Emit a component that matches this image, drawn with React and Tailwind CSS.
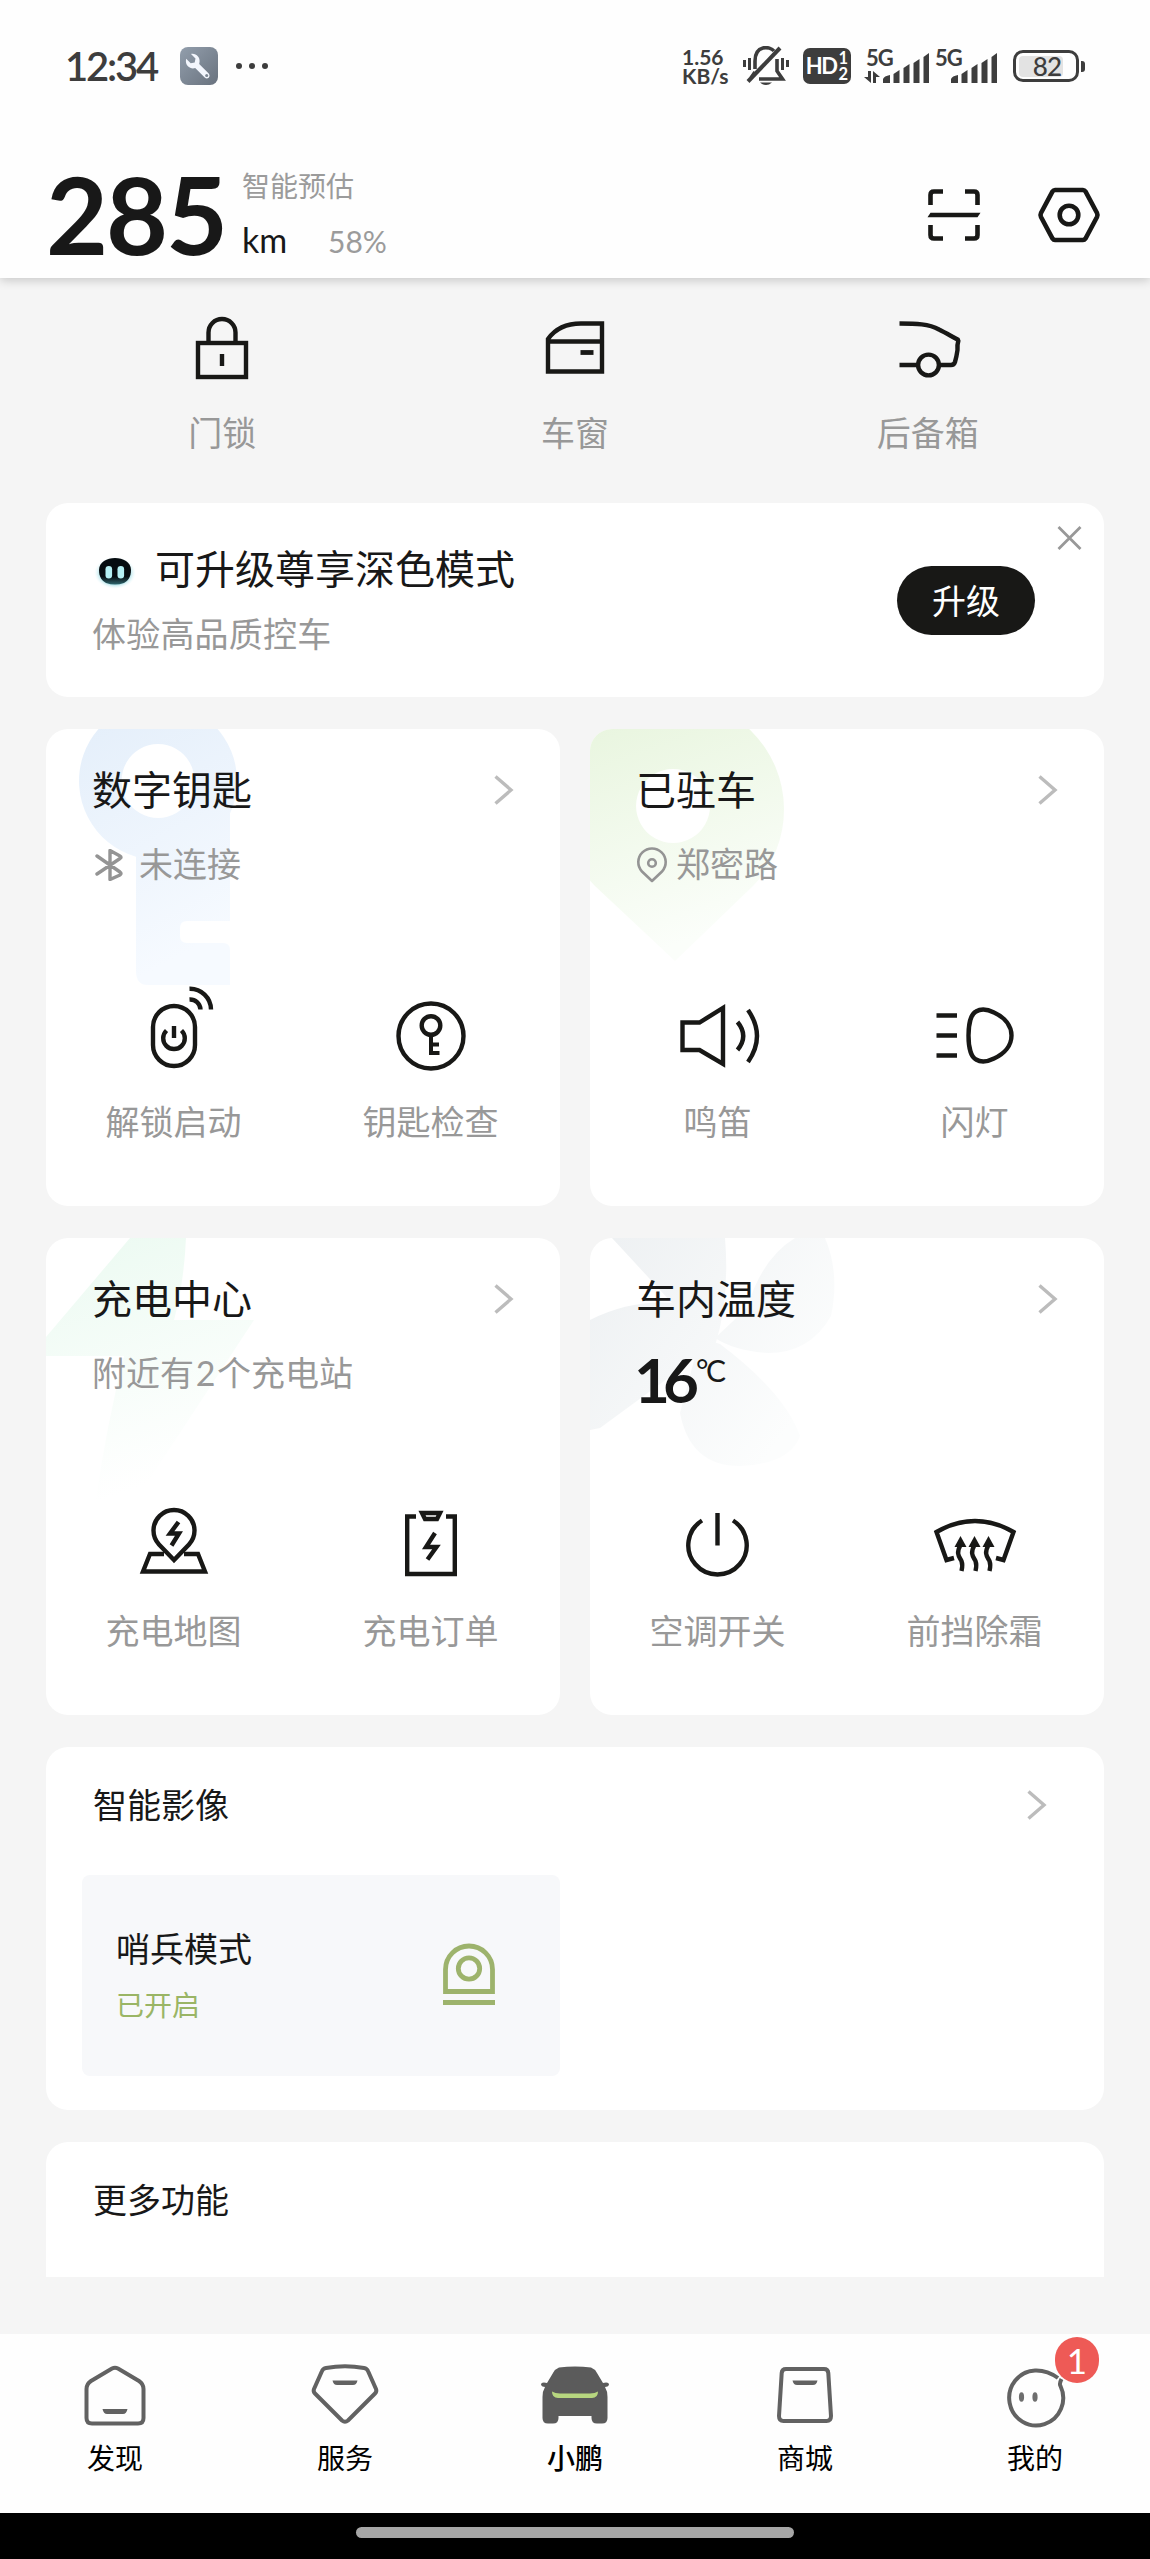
import React from "react";

const INK = "#181816";

function Glyph({ className = "size-[100px]", box = "-50 -50 100 100", color = INK, width = 4.4, children }) {
  return (
    <svg className={`shrink-0 overflow-visible ${className}`} viewBox={box} fill="none" stroke={color} strokeWidth={width}>
      {children}
    </svg>
  );
}

function Chevron() {
  return (
    <svg className="h-[30px] w-5 shrink-0" viewBox="0 0 20 30" fill="none" stroke="#bcbcbc" strokeWidth="3.4">
      <path d="M1.5 1.5 L17 15 L1.5 28.5" />
    </svg>
  );
}

/* ---------- status bar ---------- */

function SignalBars() {
  return (
    <svg className="h-[30px] w-[46px]" viewBox="0 0 46 30" fill="#3d3d3d">
      <path d="M0 30v-4q1-3 7-4v8zM10.500 30v-9l6-4v13zM20.500 30v-15l6-4v19zM30.500 30v-20l6-4v24zM40.500 30v-26l5.500-4v30z" />
    </svg>
  );
}

function StatusBar() {
  return (
    <div className="flex h-[132px] items-center pl-[65px] pr-[65px] text-[#3d3d3d]">
      <span className="w-[115px] whitespace-nowrap text-[40px] font-semibold leading-[40px] tracking-[-2.2px]">12:34</span>
      <svg className="h-[38px] w-[38px]" viewBox="0 0 38 38">
        <defs>
          <linearGradient id="tool" x1="0" y1="0" x2="1" y2="1">
            <stop offset="0" stopColor="#929eac" />
            <stop offset="1" stopColor="#69727e" />
          </linearGradient>
        </defs>
        <rect width="38" height="38" rx="8" fill="url(#tool)" />
        <path
          d="M11 7l4.500 4.500-.8 4-4 .8-4.500-4.500c-1 4 .5 7.500 4 9 1.800.8 3.500.7 5 .2l9.500 9.500c3 2.500 6.500-.8 4-4l-9.500-9.500c.8-3 .5-5.500-1.200-7.500C16.200 7.400 13.800 6.500 11 7z"
          fill="#f3f6fd"
        />
        <circle cx="26.700" cy="28.500" r="1.500" fill="#7c8693" />
      </svg>
      <div className="ml-[18px] flex gap-[7px]">
        <i className="size-1.5 rounded-full bg-[#3d3d3d]" />
        <i className="size-1.5 rounded-full bg-[#3d3d3d]" />
        <i className="size-1.5 rounded-full bg-[#3d3d3d]" />
      </div>
      <div className="ml-auto flex items-center">
        <div className="w-[61px] text-[21px] font-bold leading-[19px]">
          <div>1.56</div>
          <div>KB/s</div>
        </div>
        <svg className="h-[40px] w-[46px]" viewBox="0 0 46 40" fill="none" stroke="#3d3d3d" strokeWidth="3.600">
          <path d="M5 35.500L37 2" strokeWidth="4" />
          <path d="M12 23V15C12 -1.500 27 0 31 5M8 32l4-6" />
          <path d="M16 33H39.500L34 25V13" />
          <path d="M17 36.500h12q-6 5-12 0z" fill="#3d3d3d" stroke="none" />
          <path d="M1.500 14v7M6.500 12v12M39.500 12v12M44.500 14v7" strokeWidth="3" />
        </svg>
        <div className="ml-[14px] flex h-[36px] w-[48px] items-center justify-center rounded-[7px] bg-[#3d3d3d] text-white">
          <span className="text-[22px] font-bold leading-[22px] tracking-[-1.5px]">HD</span>
          <span className="ml-0.5 flex flex-col text-[16.500px] font-bold leading-[16px]">
            <span>1</span>
            <span>2</span>
          </span>
        </div>
        <div className="ml-[13px] flex h-[33px] w-[65px] items-end">
          <div className="flex h-full w-[18.500px] flex-col justify-between">
            <span className="pl-0.5 text-[22px] font-bold leading-[16px] tracking-[-1px]">5G</span>
            <svg className="h-[12px] w-[16px]" viewBox="0 0 16 12" fill="#3d3d3d">
              <path d="M4 0h3v12L0 6h4zM9 0l7 6h-4v6H9z" />
            </svg>
          </div>
          <SignalBars />
        </div>
        <div className="ml-[6px] flex h-[33px] w-[63px] items-end">
          <span className="h-full w-[16px] text-[22px] font-bold leading-[16px] tracking-[-1px]">5G</span>
          <SignalBars />
        </div>
        <div className="ml-[15px] flex h-[32px] w-[66px] items-center rounded-[10px] border-[3.500px] border-[#3d3d3d] p-[3px]">
          <div className="flex h-[21px] w-[44px] items-center justify-end rounded-[4px] bg-[#e3e3e3] pr-[2px]">
            <span className="text-[26px] font-medium leading-[21px] tracking-[-1px]">82</span>
          </div>
        </div>
        <i className="ml-0.5 h-[11px] w-1 rounded-r-[3px] bg-[#3d3d3d]" />
      </div>
    </div>
  );
}

/* ---------- header ---------- */

function Header() {
  return (
    <header className="z-10 h-[278px] shrink-0 bg-[#fefefe] shadow-[0_2px_10px_rgba(0,0,0,0.2)]">
      <StatusBar />
      <div className="flex pl-[46px] pr-[46px]">
        <span className="w-[196px] pt-[32px] text-[107px] font-bold leading-[100px] tracking-[-2px] text-[#181818]">285</span>
        <div className="flex flex-col">
          <span className="mt-[38px] text-[28px] leading-[32px] text-[#9b9b9b]">智能预估</span>
          <div className="mt-[20px] flex items-baseline leading-[36px]">
            <span className="w-[86px] text-[34px] text-[#181818]">km</span>
            <span className="text-[30px] text-[#9b9b9b]">58%</span>
          </div>
        </div>
        <div className="ml-auto flex pt-[53px]">
          <Glyph className="h-[60px] w-[60px]" box="-30 -30 60 60" width={4.6}>
            <path d="M-23.500 -10V-20Q-23.500 -23.500 -20 -23.500H-11M11 -23.500H20Q23.500 -23.500 23.500 -20V-10M23.500 10V20Q23.500 23.500 20 23.500H11M-11 23.500H-20Q-23.500 23.500 -23.500 20V10" />
            <path d="M-23.500 -2.300H26.500L23.500 2.300H-26.500z" fill={INK} stroke="none" />
          </Glyph>
          <Glyph className="ml-[50px] h-[60px] w-[70px]" box="-35 -30 70 60" width={4.6}>
            <path d="M-14 -25H14Q15.500 -25 16.500 -23.500L28 -2Q29 0 28 2L16.500 23.500Q15.500 25 14 25H-14Q-15.500 25 -16.500 23.500L-28 2Q-29 0 -28 -2L-16.500 -23.500Q-15.500 -25 -14 -25Z" />
            <circle r="9.300" />
          </Glyph>
        </div>
      </div>
    </header>
  );
}

/* ---------- quick controls ---------- */

const quick = [
  {
    label: "门锁",
    art: (
      <>
        <rect x="-24" y="-5" width="48" height="34" />
        <path d="M-13.500 -5V-15.500A13.500 13.500 0 0 1 13.500 -15.500V-5M0 6V18" />
      </>
    ),
  },
  {
    label: "车窗",
    art: (
      <>
        <path d="M-27 23.500V-9Q-16 -24.500 6 -24.500H27V23.500ZM-27 -6.500H27" />
        <path d="M5.500 4.500H18.500" strokeWidth="4.800" />
      </>
    ),
  },
  {
    label: "后备箱",
    art: (
      <>
        <path d="M-28.500 -24.500C-12 -24.500 1 -24 11 -18.500C18 -15 23 -12 30.500 -8Q29 -3 29.500 2Q28.500 9 27 14Q26 17 23 17H11M-28.500 17H-10" strokeLinejoin="bevel" />
        <circle cx="0.500" cy="17" r="10.400" />
      </>
    ),
  },
];

function QuickControls() {
  return (
    <div className="grid h-[225px] grid-cols-3">
      {quick.map((q) => (
        <div key={q.label} className="flex flex-col items-center pt-[20px]">
          <Glyph>{q.art}</Glyph>
          <span className="mt-[18px] text-[34px] leading-[34px] text-[#989898]">{q.label}</span>
        </div>
      ))}
    </div>
  );
}

function Banner() {
  return (
    <section className="flex h-[194px] rounded-[22px] bg-white pl-[46px] pr-[22px]">
      <div className="pt-[44px]">
        <div className="flex items-center">
          <svg className="h-[40px] w-[44px]" viewBox="0 0 44 40">
            <defs>
              <radialGradient id="glow">
                <stop offset="0.600" stopColor="#6fc8d2" />
                <stop offset="1" stopColor="#e8fbff" stopOpacity="0" />
              </radialGradient>
              <linearGradient id="head" x1="0" y1="0" x2="0" y2="1">
                <stop offset="0.700" stopColor="#060c10" />
                <stop offset="1" stopColor="#2f666e" />
              </linearGradient>
            </defs>
            <ellipse cx="23" cy="24" rx="21" ry="16" fill="url(#glow)" />
            <path d="M7 21C7 5 39 5 39 21C39 28 36 31.500 32 34Q23 37 14 34C10 31.500 7 28 7 21Z" fill="url(#head)" />
            <rect x="13.500" y="17" width="6.600" height="12.500" rx="3.300" fill="#b5eff3" />
            <rect x="25.500" y="17" width="6.600" height="12.500" rx="3.300" fill="#b5eff3" />
          </svg>
          <span className="ml-[19px] text-[40px] leading-[44px] text-[#181818]">可升级尊享深色模式</span>
        </div>
        <div className="mt-[26px] text-[34px] leading-[34px] tracking-[0.2px] text-[#989898]">体验高品质控车</div>
      </div>
      <button className="ml-auto mt-[63px] h-[69px] w-[138px] rounded-full bg-[#181816] text-[34px] leading-[34px] text-white">升级</button>
      <svg className="ml-[22px] mt-[22px] h-[26px] w-[25px]" viewBox="0 0 25 26" fill="none" stroke="#989898" strokeWidth="2.800">
        <path d="M1.500 2L23.500 24M23.500 2L1.500 24" />
      </svg>
    </section>
  );
}

/* ---------- feature cards ---------- */

function Action({ label, art }) {
  return (
    <div className="flex flex-col items-center">
      <Glyph>{art}</Glyph>
      <span className="mt-[19px] text-[34px] leading-[34px] text-[#989898]">{label}</span>
    </div>
  );
}

function FeatureCard({ title, detail, mark, actions }) {
  return (
    <section className="relative h-[477px] overflow-hidden rounded-[22px] bg-white">
      <svg className="absolute inset-0 h-[477px] w-[514px]" viewBox="0 0 514 477">
        {mark}
      </svg>
      <div className="relative">
        <div className="flex h-[81px] items-end pl-[46px] pr-[46px]">
          <span className="flex-1 text-[40px] leading-[40px] text-[#181818]">{title}</span>
          <div className="flex h-[40px] items-center">
            <Chevron />
          </div>
        </div>
        <div className="mt-[37px] flex h-[48px] items-start pl-[46px] text-[34px] leading-[34px] text-[#989898]">{detail}</div>
        <div className="-ml-px mr-px mt-[91px] grid grid-cols-2">
          {actions.map((a) => (
            <Action key={a.label} {...a} />
          ))}
        </div>
      </div>
    </section>
  );
}

function fade(id, from, to, x2 = "0.3") {
  return (
    <defs>
      <linearGradient id={id} x1="0" y1="0" x2={x2} y2="1">
        <stop offset="0" stopColor={from} />
        <stop offset="1" stopColor={to} />
      </linearGradient>
    </defs>
  );
}

const keyCard = {
  title: "数字钥匙",
  detail: (
    <>
      <svg className="ml-[3px] mt-[2px] h-[32px] w-[28px]" viewBox="0 0 28 32" fill="none" stroke="#949494" strokeWidth="3.400" strokeLinejoin="round" strokeLinecap="round">
        <path d="M2 7L25 23Q27 24.500 25 26L15 30.500V1.500L25 7Q27 8 25 9.500L2 25" />
      </svg>
      <span className="ml-[16px]">未连接</span>
    </>
  ),
  mark: (
    <>
      {fade("keyTint", "#e3eefa", "#f6faff")}
      <path
        fill="url(#keyTint)"
        fillRule="evenodd"
        d="M90 127.800A79 79 0 1 1 184 84.500V192H141Q134 192 134 199V207Q134 214 141 214H177Q184 214 184 221V256H102Q90 256 90 242ZM112 15A36.500 37 0 1 0 112.100 15Z"
      />
    </>
  ),
  actions: [
    {
      label: "解锁启动",
      art: (
        <>
          <rect x="-21" y="-30" width="42" height="60" rx="21" />
          <path d="M-7.500 -5.500A10.800 10.800 0 1 0 7.500 -5.500M0 -10V2" />
          <path d="M15.500 -47.300A21 21 0 0 1 37 -26.500M15.500 -36.500A10.500 10.500 0 0 1 26.500 -26.500" />
        </>
      ),
    },
    {
      label: "钥匙检查",
      art: (
        <>
          <circle r="32.500" />
          <circle cy="-10.500" r="9.300" />
          <path d="M0 -1V19M0 8.500H8M0 17H8.500" strokeWidth="4" />
        </>
      ),
    },
  ],
};

const parkCard = {
  title: "已驻车",
  detail: (
    <>
      <svg className="h-[36px] w-[32px]" viewBox="0 0 32 36" fill="none" stroke="#949494" strokeWidth="2.600">
        <path d="M16 34L6 24.500A13.700 13.700 0 1 1 26 24.500Z" strokeLinejoin="round" />
        <circle cx="16" cy="16" r="3.800" />
      </svg>
      <span className="ml-[8px]">郑密路</span>
    </>
  ),
  mark: (
    <>
      {fade("pinTint", "#e6f4db", "#fbfefa")}
      <path fill="url(#pinTint)" fillRule="evenodd" d="M85 232L5 157A110 110 0 1 1 163 157ZM83 40A37 37 0 1 0 83.100 40Z" />
    </>
  ),
  actions: [
    {
      label: "鸣笛",
      art: (
        <>
          <path d="M-35.500 -13.500H-18.500L5 -28V28L-18.500 14H-35.500Z" />
          <path d="M19.500 -14Q31 0 19.500 14M30 -26Q48 0 30 26" />
        </>
      ),
    },
    {
      label: "闪灯",
      art: (
        <>
          <path d="M-38.500 -20.500H-18M-38.500 -.5H-18M-38.500 19.500H-18" />
          <path d="M-6.500 -.5C-6.500 -12 -4 -22 1 -24.500C6 -27.500 13 -26.500 19 -23.500C30 -18.500 36.500 -10 36.500 -.5C36.500 9 30 17.500 19 22.500C13 25.500 6 26.500 1 23.500C-4 21 -6.500 11 -6.500 -.5Z" />
        </>
      ),
    },
  ],
};

const chargeCard = {
  title: "充电中心",
  detail: (
    <span className="flex">
      附近有<span className="w-[23px] text-center">2</span>个充电站
    </span>
  ),
  mark: (
    <>
      {fade("boltTint", "#ebfaf1", "#ffffff")}
      <path fill="url(#boltTint)" d="M84 0H140Q138 45 128 82H208L90 262H50Q60 190 78 118H-6V106Z" />
    </>
  ),
  actions: [
    {
      label: "充电地图",
      art: (
        <>
          <path d="M0 15L-15 -.5A20.500 20.500 0 1 1 15 -.5Z" />
          <path d="M-10 9H-24L-31 26.500H31L24 9H10" />
          <path d="M4.500 -23L-4 -11.500H5L-2.500 .5" />
        </>
      ),
    },
    {
      label: "充电订单",
      art: (
        <>
          <path d="M-15 -28.500H-23.800V29H23.800V-28.500H15" />
          <path d="M-9 -32H9L6 -26H-6Z" />
          <path d="M4 -12L-5 2H5.500L-3.500 14.500" />
        </>
      ),
    },
  ],
};

const wave = (x) => (
  <g key={x}>
    <path d={`M${x} -9L${x + 6} 2H${x - 6}Z`} fill={INK} stroke="none" />
    <path d={`M${x} 0C${x - 5} 9 ${x - 1} 12 ${x + 1} 16Q${x + 2.5} 20 ${x + 1} 26`} />
  </g>
);

const climateCard = {
  title: "车内温度",
  detail: (
    <div className="-ml-0.5 flex text-[#181818]">
      <span className="w-[60px] text-[62px] font-bold leading-[46px] tracking-[-7px]">16</span>
      <span className="ml-[2px] mt-[-3px] text-[30px] leading-[34px] tracking-[-2.5px]">°C</span>
    </div>
  ),
  mark: (
    <>
      <defs>
        <linearGradient id="fanTint" gradientUnits="userSpaceOnUse" x1="0" y1="0" x2="220" y2="160">
          <stop offset="0" stopColor="#edf0f2" />
          <stop offset="1" stopColor="#fcfdfd" />
        </linearGradient>
      </defs>
      <g fill="url(#fanTint)">
        <path d="M22 0H135Q140 60 125 108H108L82 65Z" />
        <path d="M0 82Q40 62 82 65L122 108L10 190L0 192Z" />
        <path d="M157 70Q172 20 205 0H235Q250 35 241 78Q220 115 178 115Q145 113 125 100Z" />
        <path d="M90 175Q100 228 150 228Q200 226 210 198Q195 155 130 106L110 100Z" />
      </g>
    </>
  ),
  actions: [
    { label: "空调开关", art: <path d="M-16 -24.500A29.200 29.200 0 1 0 15 -24.500M-.5 -32V.5" /> },
    {
      label: "前挡除霜",
      art: (
        <>
          <path d="M-21 13L-28.500 15L-38.500 -13Q0 -35 38.500 -13L28.500 15L21 13" />
          {[-14.5, -0.5, 13.5].map(wave)}
        </>
      ),
    },
  ],
};

/* ---------- camera and more ---------- */

function Camera() {
  return (
    <section className="mt-[32px] h-[363px] rounded-[22px] bg-white pl-[36px]">
      <div className="flex h-[128px] items-start pl-[11px] pr-[57px] pt-[41px]">
        <span className="flex-1 text-[34px] leading-[34px] text-[#181818]">智能影像</span>
        <div className="pt-0.5">
          <Chevron />
        </div>
      </div>
      <div className="flex h-[201px] w-[478px] items-center rounded-[8px] bg-[#f7f8fa] pl-[34px] pr-[41px]">
        <div className="flex-1">
          <div className="text-[34px] leading-[34px] text-[#181818]">哨兵模式</div>
          <div className="mt-[25px] text-[28px] leading-[28px] text-[#9ab565]">已开启</div>
        </div>
        <Glyph className="h-[64px] w-[100px]" box="-50 -31 100 64" color="#9db36c" width={4.8}>
          <path d="M-23.500 16.500V-5.500A23.500 23.500 0 0 1 23.500 -5.500V16.500ZM-26 27.500H26" />
          <circle cy="-6.500" r="10.700" />
        </Glyph>
      </div>
    </section>
  );
}

/* ---------- bottom navigation ---------- */

const tabs = [
  {
    label: "发现",
    art: (
      <>
        <path d="M-3 -26.500Q0 -28 3 -26.500L24 -14Q28.500 -11 28.500 -6V23Q28.500 28.500 23 28.500H-23Q-28.500 28.500 -28.500 23V-6Q-28.500 -11 -24 -14Z" />
        <path d="M-12.500 14H12.500Q11.500 19 8 19H-8Q-11.500 19 -12.500 14Z" fill="#626262" stroke="none" />
      </>
    ),
  },
  {
    label: "服务",
    art: (
      <>
        <path d="M-19 -27Q0 -30.500 19 -27Q22 -26.500 23 -24L31 -6Q32 -3.500 30 -1.500L3 25.500Q0 28 -3 25.500L-30 -1.500Q-32 -3.500 -31 -6L-23 -24Q-22 -26.500 -19 -27Z" />
        <path d="M-12.500 -14.500H12.500Q11.500 -10 8 -10H-8Q-11.500 -10 -12.500 -14.500Z" fill="#626262" stroke="none" />
      </>
    ),
  },
  {
    label: "小鹏",
    active: true,
    art: (
      <g stroke="none">
        <path
          fill="#5b5b5b"
          d="M-16 -27.500Q0 -29.500 16 -27.500Q20 -26 22 -22L28 -12Q34 -13.500 34 -10Q33 -8 30 -8Q32.500 -4 32.500 2V23Q32.500 28.500 27 28.500H22Q16.500 28.500 16.500 23V21H-16.500V23Q-16.500 28.500 -22 28.500H-27Q-32.500 28.500 -32.500 23V2Q-32.500 -4 -30 -8Q-33 -8 -34 -10Q-34 -13.500 -28 -12L-22 -22Q-20 -26 -16 -27.500Z"
        />
        <path fill="#b7d67f" d="M-23 -3.500Q-20 -1.500 -15 -1.500H15Q20 -1.500 23 -3.500Q23 3 17 3H-17Q-23 3 -23 -3.500Z" />
      </g>
    ),
  },
  {
    label: "商城",
    art: (
      <>
        <path d="M-19 -26H19Q23 -26 23.300 -22L26 21Q26 26 21.500 26H-21.500Q-26 26 -26 21L-23.300 -22Q-23 -26 -19 -26Z" />
        <path d="M-12.500 -14.500H12.500Q11.500 -10 8 -10H-8Q-11.500 -10 -12.500 -14.500Z" fill="#626262" stroke="none" />
      </>
    ),
  },
  {
    label: "我的",
    badge: "1",
    art: (
      <>
        <path d="M23 -17Q12 -25 0 -24.500A27 27.500 0 1 0 25.500 -9Q24 -11 26.500 -16" />
        <ellipse cx="-13.500" cy="2" rx="2.600" ry="4.700" fill="#6e6e6e" stroke="none" />
        <ellipse cx="0" cy="2" rx="2.600" ry="4.700" fill="#6e6e6e" stroke="none" />
      </>
    ),
  },
];

function TabBar() {
  return (
    <nav className="z-10 grid h-[179px] shrink-0 grid-cols-5 bg-[#fefefe]">
      {tabs.map((t) => (
        <div key={t.label} className="flex flex-col items-center pt-[21px]">
          <div className="relative size-[80px]">
            <Glyph className="size-[80px]" box="-40 -40 80 80" color="#626262" width={4}>
              {t.art}
            </Glyph>
            {t.badge && (
              <span className="absolute -top-[18px] left-[60px] flex h-[46px] w-[44px] items-center justify-center rounded-full bg-[#ee5a56] text-[35px] leading-[46px] text-white">
                {t.badge}
              </span>
            )}
          </div>
          <span className={`mt-[9px] text-[28px] leading-[28px] text-black ${t.active ? "font-medium" : ""}`}>{t.label}</span>
        </div>
      ))}
    </nav>
  );
}

function Content() {
  return (
    <main className="h-[2056px] shrink-0 px-[46px]">
      <QuickControls />
      <Banner />
      <div className="mt-[32px] grid grid-cols-[514px_514px] gap-x-[30px] gap-y-[32px]">
        <FeatureCard {...keyCard} />
        <FeatureCard {...parkCard} />
        <FeatureCard {...chargeCard} />
        <FeatureCard {...climateCard} />
      </div>
      <Camera />
      <section className="mt-[32px] h-[135px] rounded-t-[22px] bg-white pl-[47px] pt-[41px] text-[34px] leading-[34px] text-[#181818]">更多功能</section>
    </main>
  );
}

export default function App() {
  return (
    <div className="flex h-[2559px] w-[1150px] flex-col overflow-hidden bg-[#f5f5f5] [font-family:Lato,'Noto_Sans_CJK_SC',sans-serif]">
      <Header />
      <Content />
      <TabBar />
      <div className="flex h-[46px] shrink-0 justify-center bg-black pt-[14px]">
        <div className="h-[11px] w-[438px] rounded-full bg-[#a6a6a6]" />
      </div>
    </div>
  );
}
